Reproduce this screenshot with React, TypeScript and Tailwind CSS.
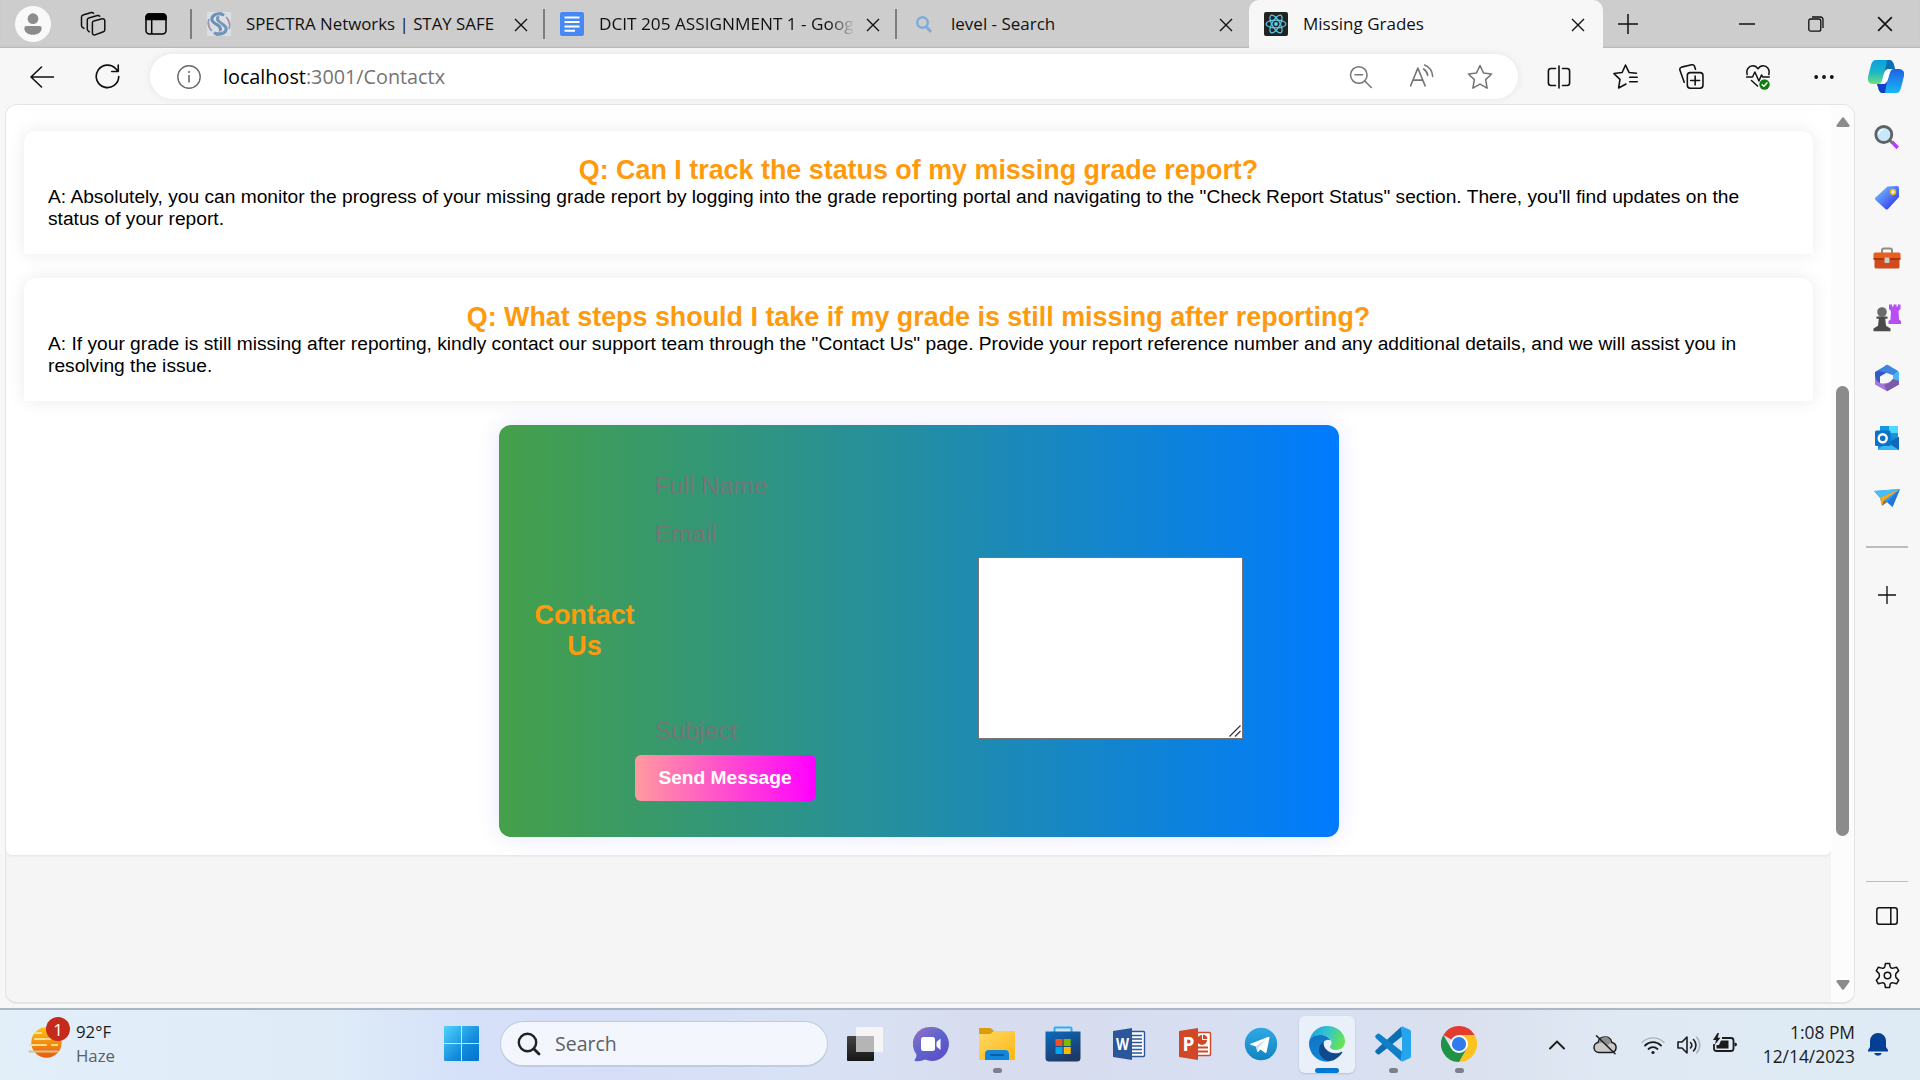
import React from 'react';

type IconProps = { className?: string };

/* ---------- Browser chrome icons ---------- */

const Close = ({ className = 'size-3.5' }: IconProps) => (
  <svg viewBox="0 0 14 14" className={className} fill="none" stroke="#111" strokeWidth="1.4">
    <path d="M1 1l12 12M13 1L1 13" />
  </svg>
);

const Avatar = () => (
  <svg viewBox="0 0 36 36" className="size-9">
    <circle cx="18" cy="18" r="18" fill="#f9f9f9" />
    <circle cx="18" cy="12.7" r="5.4" fill="#8c8c8c" />
    <path d="M11.5 20h13a2.2 2.2 0 0 1 2.2 2.2c0 3.8-3.7 6.5-8.7 6.5s-8.7-2.700-8.7-6.500A2.200 2.200 0 0 1 11.500 20z" fill="#8c8c8c" />
  </svg>
);

const Workspaces = () => (
  <svg viewBox="0 0 26 26" className="size-[26px]" fill="none" stroke="#111" strokeWidth="1.5" strokeLinejoin="round" strokeLinecap="round">
    <path d="M13.800 9.900l8.500-2.200a2 2 0 0 1 2.500 1.900v9.200a2 2 0 0 1-1.400 1.900l-8.400 3.200a1.900 1.900 0 0 1-2.600-1.800V11.800a2 2 0 0 1 1.400-1.900z" />
    <path d="M9.300 20.800l-1-.8a2.300 2.300 0 0 1-1-1.900V8.900c0-.9.600-1.700 1.500-1.900l8.700-2.500c.9-.2 1.700 0 2.200.7" />
    <path d="M4 17.300l-1.500-1a2.300 2.300 0 0 1-1-1.900V5.900c0-.9.600-1.700 1.500-1.900l8.300-2.500c.9-.2 1.700 0 2.200.7" />
  </svg>
);

const TabActions = () => (
  <svg viewBox="0 0 22 22" className="size-[22px]" fill="none" stroke="#000" strokeWidth="1.5">
    <rect x="1" y="1" width="20" height="20" rx="3.500" />
    <path d="M1 6V4a3 3 0 0 1 3-3h14a3 3 0 0 1 3 3v2.500H1z" fill="#000" />
    <path d="M6.700 6v15" />
  </svg>
);

const SpectraIcon = () => (
  <svg viewBox="0 0 24 24" className="size-6">
    <rect width="24" height="24" fill="#dcdfe2" />
    <path d="M17 3.500C12-.5 4 3 5 8c1 4.500 8 4 8.500 9 .3 3-2 5-4.500 5.500" fill="none" stroke="#6d90b5" strokeWidth="3" />
    <path d="M7 20.500c5 4 13 .5 12-4.500-1-4.500-8-4-8.500-9C10.300 4 12.500 2 15 1.500" fill="none" stroke="#7295b8" strokeWidth="3" />
    <path d="M19 5c4 4 4.500 8 3 12M5 19C1 15 .5 11 2 7" fill="none" stroke="#8196c4" strokeWidth="1.600" />
    <path d="M21 8l1.500 4M2.500 16L1.500 12" stroke="#d08a8a" strokeWidth="1.500" />
    <path d="M16 5C10 2 7 5 8 8c1 3 8 3.500 8 9M8 19c5 2 8 0 8-3" fill="none" stroke="#dfe6ee" strokeWidth=".8" />
  </svg>
);

const DocsIcon = () => (
  <svg viewBox="0 0 24 24" className="size-6">
    <rect width="24" height="24" rx="2" fill="#4688f4" />
    <path d="M4.500 5.400h15M4.500 9.900h15M4.500 14.400h15M4.500 18.700h10.500" stroke="#fff" strokeWidth="2" />
  </svg>
);

const SmallSearch = () => (
  <svg viewBox="0 0 24 24" className="size-6" fill="none" stroke="#7fabd6" strokeWidth="2.400">
    <circle cx="10.500" cy="10.500" r="5.300" />
    <path d="M14 14.500l5 5.500" strokeWidth="2.800" />
  </svg>
);

const ReactIcon = () => (
  <svg viewBox="0 0 24 24" className="size-6" fill="none" stroke="#5ccfee" strokeWidth="1.200">
    <rect width="24" height="24" rx="2" fill="#222" stroke="none" />
    <ellipse cx="12" cy="12" rx="10" ry="3.900" />
    <ellipse cx="12" cy="12" rx="10" ry="3.900" transform="rotate(60 12 12)" />
    <ellipse cx="12" cy="12" rx="10" ry="3.900" transform="rotate(120 12 12)" />
    <circle cx="12" cy="12" r="1.900" fill="#5ccfee" stroke="none" />
  </svg>
);

const Plus = ({ className = 'size-5' }: IconProps) => (
  <svg viewBox="0 0 20 20" className={className} stroke="#111" strokeWidth="1.500">
    <path d="M10 0v20M0 10h20" />
  </svg>
);

const Back = () => (
  <svg viewBox="0 0 24 22" className="h-[22px] w-6" fill="none" stroke="#111" strokeWidth="1.600" strokeLinecap="round" strokeLinejoin="round">
    <path d="M11.500 1L1 11l10.500 10M1 11h22.500" />
  </svg>
);

const Refresh = () => (
  <svg viewBox="0 0 24 24" className="size-[25px]" fill="none" stroke="#111" strokeWidth="1.600" strokeLinecap="round" strokeLinejoin="round">
    <path d="M22.800 12A10.800 10.800 0 1 1 20 4.600l2.200 2.500M22.300 1v6.200h-6.200" />
  </svg>
);

const Info = () => (
  <svg viewBox="0 0 24 24" className="size-6" fill="none" stroke="#6b6b6b" strokeWidth="1.400">
    <circle cx="12" cy="12" r="11.200" />
    <path d="M12 10v7.500" strokeWidth="1.600" />
    <circle cx="12" cy="7" r="1.100" fill="#6b6b6b" stroke="none" />
  </svg>
);

const ZoomOut = () => (
  <svg viewBox="0 0 24 24" className="size-6" fill="none" stroke="#757575" strokeWidth="1.500" strokeLinecap="round">
    <circle cx="9.800" cy="10" r="8.300" />
    <path d="M15.800 16l6.500 6.500M6 9.700h7.600" />
  </svg>
);

const ReadAloud = () => (
  <svg viewBox="0 0 24 24" className="size-[25px]" fill="none" stroke="#757575" strokeWidth="1.500" strokeLinecap="round" strokeLinejoin="round">
    <path d="M1.500 21L8.500 4l7 17M4 15.500h9" />
    <path d="M14 4.800a9 9 0 0 1 4 6.200M15 1a12.500 12.500 0 0 1 7.700 11" />
  </svg>
);

const Star = () => (
  <svg viewBox="0 0 24 24" className="size-[26px]" fill="none" stroke="#757575" strokeWidth="1.400" strokeLinejoin="round">
    <path d="M12 1.400l3.200 6.800 7.500 1-5.500 5.200 1.400 7.900L12 18.500l-6.600 3.800 1.400-7.900-5.500-5.200 7.500-1z" />
  </svg>
);

const SplitScreen = () => (
  <svg viewBox="0 0 24 24" className="size-6" fill="none" stroke="#111" strokeWidth="1.600" strokeLinecap="round">
    <path d="M12 1v22M8.500 3.500H4A2.600 2.600 0 0 0 1.400 6v12A2.600 2.600 0 0 0 4 20.500h4.500M15.500 3.500H20A2.600 2.600 0 0 1 22.600 6v12a2.600 2.600 0 0 1-2.600 2.500h-4.500" />
  </svg>
);

const Favorites = () => (
  <svg viewBox="0 0 24 24" className="size-[25px]" fill="none" stroke="#111" strokeWidth="1.500" strokeLinecap="round" strokeLinejoin="round">
    <path d="M22.500 8.800L15.500 8.200 12 1 8.800 8.200.9 9.200l5.800 5.500L5.400 23l7.100-3.800" />
    <path d="M16 12.700h7.300M16 17h7.300" />
  </svg>
);

const Collections = () => (
  <svg viewBox="0 0 24 24" className="size-[25px]" fill="none" stroke="#111" strokeWidth="1.500" strokeLinecap="round" strokeLinejoin="round">
    <rect x="8" y="8.300" width="15" height="15" rx="2.800" />
    <path d="M15.500 11.500v8.600M11.200 15.800h8.600M5 17.500L1 6.200A2.500 2.500 0 0 1 2.500 3l9.600-2.200a2.500 2.500 0 0 1 2.900 1.700l.8 2.600" />
  </svg>
);

const Heartbeat = () => (
  <svg viewBox="0 0 24 26" className="h-[26px] w-6" fill="none" stroke="#111" strokeWidth="1.500" strokeLinecap="round" strokeLinejoin="round">
    <path d="M1.200 10.500C-.2 5.500 3 1.800 6.900 1.800c2.300 0 3.900 1.200 5.100 3 1.200-1.800 2.800-3 5.100-3 3.900 0 7.100 3.700 5.700 8.700M5.500 16.500l6 5.500M.5 13h6l2.400-5 4 9 2.600-6 1.300 2h6.500" />
    <circle cx="18.500" cy="20.500" r="5.200" fill="#107c10" stroke="none" />
    <path d="M16.200 20.700l1.700 1.600 3-3.400" stroke="#fff" />
  </svg>
);

const Dots = () => (
  <svg viewBox="0 0 20 6" className="h-1.5 w-5" fill="#111">
    <circle cx="2.200" cy="3" r="1.900" />
    <circle cx="10" cy="3" r="1.900" />
    <circle cx="17.800" cy="3" r="1.900" />
  </svg>
);

const Copilot = () => (
  <svg viewBox="0 0 36 33" className="h-[33px] w-9">
    <defs>
      <linearGradient id="cpA" x1="0" y1="0" x2="0" y2="1"><stop offset="0" stopColor="#0aa0e0" /><stop offset=".5" stopColor="#1bb6c8" /><stop offset="1" stopColor="#6fe07a" /></linearGradient>
      <linearGradient id="cpB" x1="0" y1="0" x2="0" y2="1"><stop offset="0" stopColor="#2060e0" /><stop offset="1" stopColor="#18b8f8" /></linearGradient>
    </defs>
    <path d="M8 0h13c3 0 4 2 5 5l1 4h-6c-3 0-4 2-5 5l-2 7c-1 2-2 3-4 3H5c-4 0-6-3-5-7L3 5C4 2 5 0 8 0z" fill="url(#cpA)" />
    <path d="M19 0h2c3 0 4 2 5 5l1 4h-6c-2 0-3 1-4 2z" fill="#0d6fae" />
    <path d="M28 33H15c-3 0-4-2-5-6l-1-3h6c3 0 4-2 5-5l2-7c1-2 2-3 4-3h5c4 0 6 3 5 7l-3 12c-1 3-2 5-5 5z" fill="url(#cpB)" />
    <path d="M17 33h-2c-3 0-4-2-5-6l-1-3h6c2 0 3-1 4-3z" fill="#1440c8" />
    <path d="M16 14c1-3 2-5 5-5h2l-4 12c-1 2-2 3-4 3h-2z" fill="#fff" />
  </svg>
);

/* ---------- Edge sidebar icons ---------- */

const SideSearch = () => (
  <svg viewBox="0 0 26 26" className="size-[26px]">
    <path d="M16.500 18l2.500-2.500L25 21.500l-2.500 2.800z" fill="#b83df5" />
    <path d="M14.500 16l2-2 3 3-2.300 2z" fill="#777" />
    <circle cx="9.800" cy="9.500" r="8" fill="#c9e7fa" stroke="#5f6265" strokeWidth="2.800" />
    <path d="M5 9a5 5 0 0 1 4.500-4.500" stroke="#fff" strokeWidth="1.200" fill="none" />
  </svg>
);

const SideTag = () => (
  <svg viewBox="0 0 26 26" className="size-[26px]">
    <defs><linearGradient id="tag" x1="0" y1="0" x2="1" y2="1"><stop offset=".2" stopColor="#6ab0fb" /><stop offset=".75" stopColor="#3d4cf2" /></linearGradient></defs>
    <path d="M13.500 1.500L23 1q2 0 2 2v9L14 24q-1.300 1-2.600 0L1.500 15q-1.200-1.300 0-2.600z" fill="url(#tag)" />
    <circle cx="19" cy="7" r="2.300" fill="#fff" stroke="#f0bd1a" strokeWidth="1.700" />
  </svg>
);

const SideToolbox = () => (
  <svg viewBox="0 0 28 22" className="h-[22px] w-7">
    <path d="M9 6V3.500A2 2 0 0 1 11 1.500h6a2 2 0 0 1 2 2V6" fill="none" stroke="#8e8e8e" strokeWidth="2" />
    <rect x="1.500" y="10" width="25" height="11.500" rx="1.500" fill="#d04a1b" />
    <path d="M2 5.500h24q1.500 0 1.500 2V12H.5V7.500q0-2 1.500-2z" fill="#e8601d" />
    <path d="M.5 11h27v1.800H.5z" fill="#a6330d" />
    <rect x="11.500" y="10.500" width="5" height="5.500" rx="1" fill="#ccc" />
  </svg>
);

const SideChess = () => (
  <svg viewBox="0 0 28 28" className="size-7">
    <path d="M16 .5h3v2h1.500v-2h3v2H25v-2h2.500v4.500L25.500 7l.5 8.500 2 1.500v3H15.500v-3l2-1.500L18 7l-2-2z" fill="#b94df5" />
    <circle cx="9" cy="8" r="4.800" fill="#6b6b6b" />
    <path d="M3.500 12.500h11v2.300h-2.300l.8 7 4.500 2.700v2.800H.5v-2.800L5 21.800l.8-7H3.500z" fill="#4b4b4b" />
  </svg>
);

const SideM365 = () => (
  <svg viewBox="0 0 26 28" className="h-7 w-[26px]">
    <path d="M13 1L1 8v9l5 4V12.500L14 8z" fill="#3559c8" />
    <path d="M13 1l12 7v10l-6-3.500V11l-9-5z" fill="#4ab6f2" />
    <path d="M10 3L4 6.500 12 9l7 2 5-4L14 1q-2-.8-4 2z" fill="#3c86e2" />
    <path d="M25 17v3.500L13 27.200 1 20.500V9.500q0 8 5 9.500 7 2 13-4z" fill="#a37ad8" />
    <path d="M25 17v3.500L13 27.200l-3-6.500q6-1 9-6z" fill="#7b5cab" />
    <circle cx="13" cy="14" r="4.600" fill="#f7f7f7" />
  </svg>
);

const SideOutlook = () => (
  <svg viewBox="0 0 26 26" className="size-[26px]">
    <rect x="6" y="1" width="18" height="12" fill="#1795de" />
    <rect x="15" y="1" width="9" height="7" fill="#50d9ff" />
    <path d="M4 12h21v13H5q-1 0-1-1z" fill="#1a8ad8" />
    <path d="M25 12v13L13 18z" fill="#1268b8" />
    <path d="M4 24l10-6 11 7H5z" fill="#35b8f1" />
    <rect x="1" y="5.500" width="15.500" height="15.500" rx="1.500" fill="#0873c9" />
    <circle cx="8.700" cy="13.200" r="4" fill="none" stroke="#fff" strokeWidth="2.400" />
  </svg>
);

const SidePlane = () => (
  <svg viewBox="0 0 26 20" className="h-5 w-[26px]">
    <path d="M0 3L26 1 18.500 19 13 14 8 17.500 6 10z" fill="#2c9ff0" />
    <path d="M26 1L18.500 19l-5.500-5z" fill="#2275dc" />
    <path d="M26 1L6 9.500 8 18l2-5.500z" fill="#f6a71c" />
    <path d="M8 18l2-5.500 3 1.500z" fill="#b26a08" />
    <path d="M0 3L26 1 6 9.500z" fill="#49bdf5" />
  </svg>
);

const SidePanel = () => (
  <svg viewBox="0 0 22 18" className="h-[18px] w-[22px]" fill="none" stroke="#111" strokeWidth="1.500">
    <rect x=".8" y=".8" width="20.400" height="16.400" rx="2.500" />
    <path d="M14.800 1v16" />
  </svg>
);

const Gear = () => (
  <svg viewBox="0 0 24 24" className="size-[29px]" fill="none" stroke="#111" strokeWidth="1.250" strokeLinejoin="round">
    <path d="M10.300 2h3.400l.5 2.700q.2.800 1 1.100t1.600.1l2.700-.8 1.800 3-2 1.900q-.6.600-.6 2t.6 2l2 1.900-1.800 3-2.700-.8q-.8-.2-1.600.1t-1 1.100l-.5 2.700h-3.400l-.5-2.700q-.2-.8-1-1.100t-1.600-.1l-2.700.8-1.800-3 2-1.900q.6-.6.6-2t-.6-2l-2-1.900 1.800-3 2.700.8q.8.200 1.600-.1t1-1.100z" />
    <circle cx="12" cy="12" r="2.700" />
  </svg>
);

/* ---------- Taskbar icons ---------- */

const Weather = () => (
  <svg viewBox="0 0 34 34" className="size-[34px]">
    <defs><linearGradient id="sun" x1="0" y1="0" x2="0" y2="1"><stop offset="0" stopColor="#fcc419" /><stop offset="1" stopColor="#e8590c" /></linearGradient></defs>
    <circle cx="18.500" cy="17.500" r="15.200" fill="url(#sun)" />
    <g stroke="#fbdc8c" strokeWidth="2.200" strokeLinecap="round">
      <path d="M7 8h6M7 14h15M2 20h16M24 20h5" />
      <path d="M1.500 26.500h28" stroke="#d9c28e" />
    </g>
  </svg>
);

const Start = () => (
  <svg viewBox="0 0 35 35" className="size-[35px]">
    <defs><linearGradient id="win" x1="0" y1="0" x2="1" y2="1"><stop offset="0" stopColor="#4fd3fd" /><stop offset=".6" stopColor="#148bdc" /><stop offset="1" stopColor="#0073d0" /></linearGradient></defs>
    <path d="M1 0h16v17H0V1q0-1 1-1zM18 0h16q1 0 1 1v16H18zM0 18h17v17H1q-1 0-1-1zM18 18h17v16q0 1-1 1H18z" fill="url(#win)" />
  </svg>
);

const Magnifier = () => (
  <svg viewBox="0 0 24 24" className="size-6" fill="none" stroke="#222" strokeWidth="2.400" strokeLinecap="round">
    <circle cx="10.500" cy="10.500" r="8.700" />
    <path d="M17 17l5 5" strokeWidth="2.800" />
  </svg>
);

const TaskView = () => (
  <svg viewBox="0 0 36 36" className="size-9">
    <defs><linearGradient id="tv" x1="0" y1="0" x2="0" y2="1"><stop offset="0" stopColor="#444" /><stop offset="1" stopColor="#161616" /></linearGradient></defs>
    <rect x="0" y="10" width="27" height="25" rx="1" fill="url(#tv)" />
    <rect x="9" y="1" width="27" height="25" rx="1" fill="#f5f5f5" />
    <rect x="9" y="10" width="18" height="16" fill="#b5b5b5" />
  </svg>
);

const Chat = () => (
  <svg viewBox="0 0 36 36" className="size-9">
    <defs><linearGradient id="chat" x1="0" y1="0" x2=".8" y2="1"><stop offset="0" stopColor="#9a73c0" /><stop offset=".5" stopColor="#5f63cf" /><stop offset="1" stopColor="#5a4fc4" /></linearGradient></defs>
    <path d="M18 1a17 17 0 1 1-6 32.500Q7 36 2 35q-1-.5 0-1.500 1.500-2 1.500-5A17 17 0 0 1 18 1z" fill="url(#chat)" />
    <rect x="8" y="11" width="14" height="14" rx="2.500" fill="#fff" />
    <path d="M23.500 16l4-3.500V24l-4-3.500z" fill="#fff" />
  </svg>
);

const Folder = () => (
  <svg viewBox="0 0 36 36" className="size-9">
    <defs><linearGradient id="fold" x1="0" y1="0" x2="1" y2="1"><stop offset="0" stopColor="#ffd966" /><stop offset="1" stopColor="#fbb714" /></linearGradient></defs>
    <path d="M0 3q0-1 1-1h10q1.500 0 2.500 1.500L15 5v4H0z" fill="#dd9c0b" />
    <path d="M0 8h10q2 0 3-1.500 1-1.500 3-1.500h19q1 0 1 1v27q0 1-1 1H1q-1 0-1-1z" fill="url(#fold)" />
    <path d="M6 34V28q0-4 4-4h16q4 0 4 4v6z" fill="#1287da" />
    <path d="M12 29h12" stroke="#0b5ba6" strokeWidth="2.200" strokeLinecap="round" />
  </svg>
);

const Store = () => (
  <svg viewBox="0 0 36 36" className="size-9">
    <defs><linearGradient id="store" x1="0" y1="0" x2=".5" y2="1"><stop offset="0" stopColor="#0b6cc2" /><stop offset="1" stopColor="#1d3a66" /></linearGradient></defs>
    <path d="M9.500 7V2.500q0-1 1-1h15q1 0 1 1V7" fill="none" stroke="#25b4f0" strokeWidth="2" />
    <path d="M.5 5.500h35V32q0 3.500-3.500 3.500H4Q.5 35.500.5 32z" fill="url(#store)" />
    <path d="M10.500 13h7v7h-7z" fill="#f25022" />
    <path d="M18.700 13h7v7h-7z" fill="#7fba00" />
    <path d="M10.500 21h7v7h-7z" fill="#00a4ef" />
    <path d="M18.700 21h7v7h-7z" fill="#ffb900" />
  </svg>
);

const Word = () => (
  <svg viewBox="0 0 36 36" className="size-9">
    <rect x="18" y="5.500" width="15.500" height="25" rx="1" fill="#fff" stroke="#2b579a" strokeWidth="1.400" />
    <path d="M20 9.500h11M20 13h11M20 16.500h11M20 20h11M20 23.500h11M20 27h11" stroke="#2b579a" strokeWidth="1.700" />
    <path d="M2 5l19-3v32L2 31z" fill="#2b579a" />
    <text x="11.500" y="24" textAnchor="middle" fontSize="16" fontWeight="700" fill="#fff" fontFamily="Open Sans, sans-serif" textLength="13" lengthAdjust="spacingAndGlyphs">W</text>
  </svg>
);

const PowerPoint = () => (
  <svg viewBox="0 0 36 36" className="size-9">
    <rect x="18" y="6.500" width="15.500" height="23" rx="1" fill="#fff" stroke="#d24726" strokeWidth="1.400" />
    <path d="M21 21.500h10M21 25.500h10" stroke="#d24726" strokeWidth="1.800" />
    <circle cx="25" cy="14" r="5" fill="#d24726" />
    <path d="M25.500 13.500V8a6 6 0 0 1 5.500 5.500z" fill="#d24726" stroke="#fff" strokeWidth="1" />
    <path d="M2 5l19-3v32L2 31z" fill="#d24726" />
    <text x="11.500" y="25" textAnchor="middle" fontSize="19" fontWeight="700" fill="#fff" fontFamily="Open Sans, sans-serif">P</text>
  </svg>
);

const Telegram = () => (
  <svg viewBox="0 0 36 36" className="size-9">
    <defs><linearGradient id="tg" x1="0" y1="0" x2="0" y2="1"><stop offset="0" stopColor="#2fa9e4" /><stop offset="1" stopColor="#1284c0" /></linearGradient></defs>
    <circle cx="18" cy="18" r="16.200" fill="url(#tg)" />
    <path d="M7.500 17.800L25.500 10.800q1.200-.3 1 1L23.600 26q-.4 1.500-1.600.7l-4.500-3.300-2.300 2.300q-.8.600-1-.4l-1.400-4.900-5.200-1.600q-1.200-.5-.1-1z" fill="#fff" />
    <path d="M12.800 20.300l10-6.500-7.500 7.700-.4 3.500z" fill="#c3dcec" />
  </svg>
);

const Edge = () => (
  <svg viewBox="0 0 36 36" className="size-9">
    <defs>
      <linearGradient id="eA" x1="0" y1=".3" x2="1" y2=".6"><stop offset="0" stopColor="#1f9fe0" /><stop offset=".45" stopColor="#32c5cf" /><stop offset="1" stopColor="#6ae64a" /></linearGradient>
      <linearGradient id="eB" x1="0" y1="0" x2=".4" y2="1"><stop offset="0" stopColor="#1273bd" /><stop offset="1" stopColor="#0f84dd" /></linearGradient>
    </defs>
    <path d="M0 16C2 6 9 0 18 0c10.500 0 18 7.200 18 15.300 0 5.500-4.300 8.700-8.600 8.700-4 0-6.400-1.500-6.400-3 0-1 1.500-1.600 1.500-4.200C22.500 12 17 9 11 9 5 9 1.500 12 0 16z" fill="url(#eA)" />
    <path d="M0 17.500C0 12 5 9 10.500 9 16 9 20.500 11 21.500 14.500 18 12.500 14 15 13 19c-1.500 6.500 3 13.500 9.500 15.800C11.500 38.500 0 29.500 0 17.500z" fill="url(#eB)" />
    <path d="M15 15c-5 3.500-6.500 9.500-3.500 14.500 3.500 5.800 9.500 6.500 13.500 4.500 4-2 6.500-4.500 8.200-7.200.5-.9-.1-1.300-1-.9-3.200 1.600-9.200 2-13.200-1C15.200 22.200 14 18.500 15 15z" fill="#114a8b" />
  </svg>
);

const VsCode = () => (
  <svg viewBox="0 0 36 36" className="size-9">
    <path d="M26.500.5L4.500 20.500 1.500 23.500Q-.8 25.500 1 27l1.300 1.100q1.100.7 2.500-.2L27 10.500z" fill="#0a6fb3" />
    <path d="M26.500 35.500L4.500 15.500 1.300 12.500Q-.8 10.500 1 9l1.300-1.100q1.100-.7 2.500.2L27 25.500z" fill="#107fc8" />
    <path d="M27 .2l7.700 3.600q1.300.6 1.300 2v24.400q0 1.400-1.300 2L27 35.800z" fill="#26a4ee" />
  </svg>
);

const Chrome = () => (
  <svg viewBox="0 0 36 36" className="size-9">
    <path d="M18 18L2.400 9A18 18 0 0 1 33.600 9z" fill="#e33b2e" />
    <path d="M18 9h15.600A18 18 0 0 1 18 36l7.800-13.500z" fill="#fcc31e" />
    <path d="M10.200 22.500L2.400 9A18 18 0 0 0 18 36l7.800-13.500z" fill="#1f9245" />
    <circle cx="18" cy="18" r="9" fill="#fff" />
    <circle cx="18" cy="18" r="7.100" fill="#3079ee" />
  </svg>
);

const Chevron = () => (
  <svg viewBox="0 0 16 10" className="h-2.5 w-4" fill="none" stroke="#1c1c1c" strokeWidth="1.900" strokeLinecap="round">
    <path d="M1 8.500l7-7 7 7" />
  </svg>
);

const CloudOff = () => (
  <svg viewBox="0 0 24 20" className="h-5 w-6" fill="none" stroke="#1c1c1c" strokeWidth="1.500" strokeLinecap="round">
    <path d="M6 17.500a5 5 0 0 1-1-9.900C5.700 4 8.500 2 12 2s6 2.200 6.800 5.400a5.100 5.100 0 0 1-.3 10.100z" fill="#c9c9c9" />
    <path d="M6 8q6-2 8 3l4-3.500Q17 2 12 2T5.500 8z" fill="#8f8f8f" stroke="none" />
    <path d="M3.500.8l18.500 18" />
  </svg>
);

const Wifi = () => (
  <svg viewBox="0 0 24 20" className="h-5 w-6" fill="none" stroke="#1c1c1c" strokeWidth="1.800" strokeLinecap="round">
    <path d="M1 7.500a15.500 15.500 0 0 1 22 0" stroke="#a9b3bc" strokeWidth="1.400" />
    <path d="M4 10.500a11.300 11.300 0 0 1 16 0M7.500 14a6.500 6.500 0 0 1 9 0" />
    <circle cx="12" cy="17.500" r="1.600" fill="#1c1c1c" stroke="none" />
  </svg>
);

const Speaker = () => (
  <svg viewBox="0 0 24 20" className="h-5 w-6" fill="none" stroke="#1c1c1c" strokeWidth="1.600" strokeLinecap="round" strokeLinejoin="round">
    <path d="M1 7h4l5-5v16l-5-5H1z" />
    <path d="M13.500 7.500a4 4 0 0 1 0 5.500M16.500 4.500a8 8 0 0 1 0 11.500" />
    <path d="M19.500 2a11.500 11.500 0 0 1 0 16" stroke="#a9b3bc" strokeWidth="1.400" />
  </svg>
);

const Battery = () => (
  <svg viewBox="0 0 24 20" className="h-5 w-6">
    <path d="M9 5h9q2.500 0 2.500 2.500v8Q20.500 18 18 18H3.500Q1 18 1 15.500V11" fill="none" stroke="#1c1c1c" strokeWidth="1.800" />
    <path d="M8 7.500h7.500v8h-12V12H6z" fill="#1c1c1c" />
    <path d="M4.500 0L0 7h3L2 11.500 7.500 4.700H4.700L6 0z" fill="#1c1c1c" />
    <path d="M21.500 9.500q2.500 0 2.500 2t-2.500 2z" fill="#1c1c1c" />
  </svg>
);

const Bell = () => (
  <svg viewBox="0 0 20 24" className="h-6 w-5" fill="#043f96">
    <path d="M10 1a8 8 0 0 1 8 8v6l2 3v1.500H0V18l2-3V9a8 8 0 0 1 8-8zM6.200 21h7.600a4 4 0 0 1-7.600 0z" />
  </svg>
);

/* ---------- Sections ---------- */

const Divider = () => <div className="h-[30px] w-0.5 shrink-0 bg-[#7d7d7d]" />;

type TabProps = { icon: React.ReactNode; title: string; width: string; titleClass?: string };

function Tab({ icon, title, width, titleClass = 'text-[17px]' }: TabProps) {
  return (
    <div className={`${width} flex h-full shrink-0 items-center pr-[15px] pl-[15px]`}>
      {icon}
      <span className={`${titleClass} ml-[15px] leading-6 whitespace-nowrap text-[#111]`}>{title}</span>
      <span className="ml-auto pt-0.5">
        <Close />
      </span>
    </div>
  );
}

function TabStrip() {
  return (
    <div className="flex h-12 shrink-0 items-center bg-[#cdcdcd] shadow-[inset_0_-2px_2px_-1px_#b5b5b5]">
      <div className="flex w-[190px] shrink-0 items-center pl-[15px]">
        <Avatar />
        <span className="ml-[29px]"><Workspaces /></span>
        <span className="ml-[39px]"><TabActions /></span>
      </div>
      <Divider />
      <Tab width="w-[351px]" icon={<SpectraIcon />} title="SPECTRA Networks | STAY SAFE" titleClass="text-[16.85px]" />
      <Divider />
      <Tab
        width="w-[350px]"
        icon={<DocsIcon />}
        title="DCIT 205 ASSIGNMENT 1 - Goog"
        titleClass="-mr-3 text-[17.2px] [mask-image:linear-gradient(to_right,black_230px,transparent_256px)]"
      />
      <Divider />
      <Tab width="w-[351px]" icon={<SmallSearch />} title="level - Search" />
      <div className="ml-px h-12 w-[354px] shrink-0 rounded-t-[10px] bg-[#f7f7f7]">
        <Tab width="w-[351px]" icon={<ReactIcon />} title="Missing Grades" />
      </div>
      <span className="ml-[15px]"><Plus /></span>
      <svg viewBox="0 0 16 16" className="ml-[101px] size-4" stroke="#111" strokeWidth="1.500"><path d="M0 8h16" /></svg>
      <svg viewBox="0 0 16 16" className="ml-[53px] size-4" fill="none" stroke="#111" strokeWidth="1.300">
        <rect x=".8" y="3" width="12" height="12.200" rx="2" />
        <path d="M4 1h8.500A2.500 2.500 0 0 1 15 3.500V12" />
      </svg>
      <span className="ml-[53px]"><Close className="size-4" /></span>
    </div>
  );
}

const toolCell = 'flex w-[66.3px] justify-center';

function Toolbar() {
  return (
    <div className="flex h-14 shrink-0 items-center bg-[#f7f7f7] pt-px">
      <span className="ml-[30px]"><Back /></span>
      <span className="ml-[41px]"><Refresh /></span>
      <div className="ml-[30px] flex h-[45px] w-[1368px] shrink-0 items-center rounded-full bg-white pl-[27px] shadow-[0_0_8px_rgba(0,0,0,0.08)]">
        <Info />
        <span className="ml-[22px] text-[19.8px] leading-7 text-[#757575]">
          <span className="text-black">localhost</span>:3001/Contactx
        </span>
        <div className="ml-auto flex items-center pr-[25px]">
          <ZoomOut />
          <span className="ml-9"><ReadAloud /></span>
          <span className="ml-[33px]"><Star /></span>
        </div>
      </div>
      <div className="ml-2 flex items-center">
        <span className={toolCell}><SplitScreen /></span>
        <span className={toolCell}><Favorites /></span>
        <span className={toolCell}><Collections /></span>
        <span className={toolCell}><Heartbeat /></span>
        <span className={toolCell}><Dots /></span>
      </div>
      <span className="ml-[11px]"><Copilot /></span>
    </div>
  );
}

function Faq({ question, answer }: { question: string; answer: string }) {
  return (
    <article className="h-[123px] rounded-t-xl bg-white p-6 shadow-[0_0_18px_rgba(0,0,0,0.085)]">
      <h2 className="text-center text-[26.88px] leading-[31px] font-bold text-[#ff9a0d]">{question}</h2>
      <p className="text-[19.2px] leading-[22px] text-black">{answer}</p>
    </article>
  );
}

function ContactForm() {
  const field = 'block h-[49px] w-[343px] bg-transparent pl-5 text-[24.8px] outline-none placeholder:text-[#757575]';
  return (
    <section className="mx-auto mt-6 flex h-[412px] w-[840px] items-center rounded-xl bg-linear-to-r/srgb from-[#45a049] to-[#007bff] p-9 shadow-[0_0_24px_rgba(0,0,255,0.1)]">
      <h2 className="w-[100px] shrink-0 text-center text-[26.88px] leading-[31px] font-bold text-[#ff9a0d]">Contact Us</h2>
      <form className="h-[340px] flex-1">
        <input className={field} placeholder="Full Name" />
        <div className="-mt-px">
          <input className={field} placeholder="Email" />
        </div>
        <div className="-mt-px flex h-[198px] items-end">
          <input className={field} placeholder="Subject" />
          <div className="relative mb-4">
            <textarea className="block h-[182px] w-[265px] resize-none border border-[#767676] bg-white outline-none" />
            <svg viewBox="0 0 12 12" className="absolute right-0.5 bottom-0.5 size-3" stroke="#333" strokeWidth="1.200">
              <path d="M.5 11.500l11-11M6 11.500L11.500 6" />
            </svg>
          </div>
        </div>
        <button type="button" className="h-[46px] w-[181px] rounded-md bg-linear-to-r/srgb from-[#ff9a9e] to-[#ff00ff] text-[19.18px] font-bold text-white">
          Send Message
        </button>
      </form>
    </section>
  );
}

function PageView() {
  return (
    <div className="ml-[5px] flex h-[900px] w-[1850px] overflow-hidden rounded-xl border-t border-r border-b-2 border-l border-[#e4e4e4] bg-[#f5f5f5] font-['Liberation_Sans',Arial,sans-serif]">
      <div className="w-[1825px]">
        <div className="flex h-[750px] flex-col rounded-b-md bg-white pr-[18px] pl-[18px] shadow-[0_1px_3px_rgba(0,0,0,0.08)]">
          <div className="h-0.5 shrink-0 bg-white shadow-[0_0_18px_rgba(0,0,0,0.085)]" />
          <div className="mt-6 flex flex-col gap-6">
            <Faq
              question="Q: Can I track the status of my missing grade report?"
              answer={'A: Absolutely, you can monitor the progress of your missing grade report by logging into the grade reporting portal and navigating to the "Check Report Status" section. There, you\'ll find updates on the status of your report.'}
            />
            <Faq
              question="Q: What steps should I take if my grade is still missing after reporting?"
              answer={'A: If your grade is still missing after reporting, kindly contact our support team through the "Contact Us" page. Provide your report reference number and any additional details, and we will assist you in resolving the issue.'}
            />
          </div>
          <ContactForm />
        </div>
      </div>
      <div className="flex flex-1 flex-col items-center bg-[#fcfcfc]">
        <svg viewBox="0 0 14 10" className="mt-3 h-2.5 w-3.5" fill="#8b8b8b"><path d="M6 .7q1-1 2 0l5.500 7.500q.5 1.300-1 1.800h-11Q0 9.500.5 8.200z" /></svg>
        <div className="mt-[259px] h-[450px] w-[13px] rounded-full bg-[#8b8b8b]" />
        <svg viewBox="0 0 14 10" className="mt-36 h-2.5 w-3.5" fill="#8b8b8b"><path d="M6 9.300q1 1 2 0l5.500-7.500Q14 .5 12.500 0h-11Q0 .5.5 1.800z" /></svg>
      </div>
    </div>
  );
}

function Sidebar() {
  const cell = 'flex h-[60px] items-center justify-center';
  return (
    <aside className="flex w-[64px] flex-col">
      <div className="flex flex-col pt-1">
        <span className={cell}><SideSearch /></span>
        <span className={cell}><SideTag /></span>
        <span className={cell}><SideToolbox /></span>
        <span className={cell}><SideChess /></span>
        <span className={cell}><SideM365 /></span>
        <span className={cell}><SideOutlook /></span>
        <span className={cell}><SidePlane /></span>
      </div>
      <div className="mx-auto mt-[18px] h-0.5 w-[42px] bg-[#bdbdbd]" />
      <span className="mt-[38px] flex justify-center"><Plus className="size-[18px]" /></span>
      <div className="mx-auto mt-auto h-px w-[42px] bg-[#bdbdbd]" />
      <span className="mt-[25px] flex justify-center"><SidePanel /></span>
      <span className="mt-9 mb-[18px] flex justify-center"><Gear /></span>
    </aside>
  );
}

type TaskItemProps = { children: React.ReactNode; running?: boolean; active?: boolean };

function TaskItem({ children, running, active }: TaskItemProps) {
  return (
    <div className="flex h-full w-[66px] justify-center">
      <div
        className={
          active
            ? 'relative mt-1.5 flex h-[57px] w-14 justify-center rounded-md bg-[#eaf0f9] pt-2.5 shadow-[0_1px_2px_rgba(0,0,0,0.15)]'
            : 'relative mt-1.5 flex h-[57px] w-14 justify-center pt-2.5'
        }
      >
        {children}
        {active && <span className="absolute bottom-0 h-[5px] w-6 rounded-full bg-[#0078d4]" />}
        {running && <span className="absolute bottom-0 h-[5px] w-[9px] rounded-full bg-[#7d808a]" />}
      </div>
    </div>
  );
}

function Taskbar() {
  return (
    <div className="flex h-[72px] shrink-0 items-stretch border-t-2 border-[#adb6c3] bg-[linear-gradient(to_right,#e2eef8_0%,#dfecf8_17%,#d5e1f9_24%,#d6def8_30%,#d8e2f4_43%,#d7dcee_52%,#d7e0f3_68%,#dbe0ee_76%,#dfe9f4_84%,#deebf5_100%)]">
      <div className="flex w-[428px] shrink-0 items-start">
        <div className="relative mt-[15px] ml-7">
          <Weather />
          <span className="absolute -top-2 left-[18px] flex size-6 items-center justify-center rounded-full bg-[#c42b1c] text-[17px] leading-none text-white">1</span>
        </div>
        <div className="mt-2.5 ml-3.5 text-[16.8px] leading-6 text-[#1c1c1c]">
          <div>92°F</div>
          <div className="text-[#5b6066]">Haze</div>
        </div>
      </div>
      <TaskItem><Start /></TaskItem>
      <div className="mt-[11px] ml-1.5 flex h-[46px] w-[328px] items-center rounded-full border border-b-2 border-[#bfcce0] bg-[#f3f6fd] pl-4">
        <Magnifier />
        <span className="ml-[14px] text-[19.5px] leading-7 text-[#5c5f66]">Search</span>
      </div>
      <div className="ml-1 flex">
        <TaskItem><TaskView /></TaskItem>
        <TaskItem><Chat /></TaskItem>
        <TaskItem running><Folder /></TaskItem>
        <TaskItem><Store /></TaskItem>
        <TaskItem><Word /></TaskItem>
        <TaskItem><PowerPoint /></TaskItem>
        <TaskItem><Telegram /></TaskItem>
        <TaskItem active><Edge /></TaskItem>
        <TaskItem running><VsCode /></TaskItem>
        <TaskItem running><Chrome /></TaskItem>
      </div>
      <div className="ml-auto flex pr-8">
        <div className="flex h-[69px] items-center">
          <Chevron />
          <span className="ml-7"><CloudOff /></span>
          <span className="ml-6"><Wifi /></span>
          <span className="ml-3"><Speaker /></span>
          <span className="-mt-1 ml-3"><Battery /></span>
        </div>
        <div className="mt-2.5 ml-6 w-[94px] text-right text-[17.4px] leading-6 whitespace-nowrap text-[#1c1c1c]">
          <div>1:08 PM</div>
          <div>12/14/2023</div>
        </div>
        <span className="mt-[22px] ml-[13px]"><Bell /></span>
      </div>
    </div>
  );
}

export default function App() {
  return (
    <div className="flex h-[1080px] w-[1920px] flex-col overflow-hidden bg-[#f7f7f7] font-['Open_Sans','Noto_Sans',sans-serif]">
      <TabStrip />
      <Toolbar />
      <div className="flex h-[904px] shrink-0">
        <PageView />
        <Sidebar />
      </div>
      <Taskbar />
    </div>
  );
}
